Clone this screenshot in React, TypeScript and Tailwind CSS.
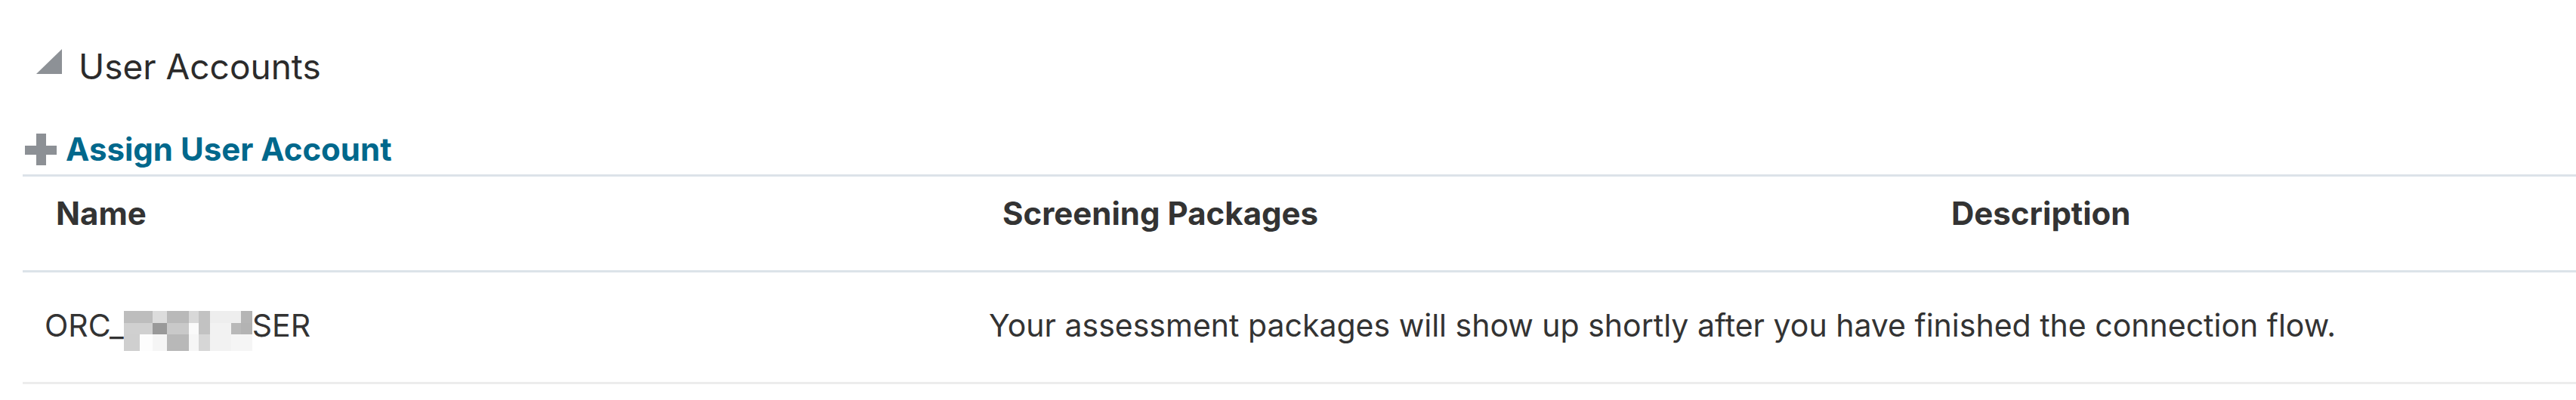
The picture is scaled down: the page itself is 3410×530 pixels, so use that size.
const mosaic = [
  { w: "w-[21px]", cells: ["bg-[#bdbdbd]", "bg-[#d0d0d0]", "bg-[#cfcfcf]"] },
  { w: "w-[17px]", cells: ["bg-[#bdbdbd]", "bg-[#d0d0d0]", "bg-[#fdfdfd]"] },
  { w: "w-[19px]", cells: ["bg-[#dcdcdc]", "bg-[#999999]", "bg-[#f5f5f5]"] },
  { w: "w-[29px]", cells: ["bg-[#b9b9b9]", "bg-[#c9c9c9]", "bg-[#b8b8b8]"] },
  { w: "w-[13px]", cells: ["bg-[#d8d8d8]", "bg-[#fafafa]", "bg-[#f6f6f6]"] },
  { w: "w-[15px]", cells: ["bg-[#c2c2c2]", "bg-[#c2c2c2]", "bg-[#d6d6d6]"] },
  { w: "w-[28px]", cells: ["bg-[#eeeeee]", "bg-[#f2f2f2]", "bg-[#f2f2f2]"] },
  { w: "w-[13px]", cells: ["bg-[#eeeeee]", "bg-[#b8b8b8]", "bg-[#f5f5f5]"] },
  { w: "w-[15px]", cells: ["bg-[#b5b5b5]", "bg-[#b3b3b3]", "bg-[#f5f5f5]"] },
];

const rowHeights = ["h-[16px]", "h-[15px]", "h-[22px]"];

// blurred part of the account name
const Mosaic = () => (
  <div className="mt-[6px] flex">
    {mosaic.map((col, i) => (
      <div key={i} className={`flex flex-col ${col.w}`}>
        {col.cells.map((c, j) => (
          <div key={j} className={`${rowHeights[j]} ${c}`} />
        ))}
      </div>
    ))}
  </div>
);

const App = () => {
  return (
    <div className="h-[530px] w-full overflow-hidden bg-white pl-[30px] pt-[60px] font-['Inter','Liberation_Sans',sans-serif] text-[#333333]">
      {/* section title */}
      <div className="flex h-[56px] items-start">
        <svg width="34" height="33" viewBox="0 0 34 33" className="ml-[18px] mt-[5px]">
          <polygon points="34,0 34,33 0,33" fill="#8d9196" />
        </svg>
        <h2 className="ml-[22px] text-[46px] leading-[56px] font-normal text-[#2b2b2b]">
          User Accounts
        </h2>
      </div>

      {/* assign link */}
      <div className="mt-[57px] flex h-[50px] items-center">
        <svg width="42" height="42" viewBox="0 0 42 42" className="ml-[3px]">
          <rect x="0" y="16" width="42" height="12" fill="#8c9095" />
          <rect x="15" y="0" width="13" height="42" fill="#8c9095" />
        </svg>
        <a className="ml-[12px] text-[42px] leading-[50px] font-bold text-[#00688c]">
          Assign User Account
        </a>
      </div>

      {/* table */}
      <div className="mt-[8px] border-t-[3px] border-[#dce3e9]">
        <div className="grid h-[127px] grid-cols-[1253px_1256px_1fr] border-b-[3px] border-[#dce3e9] pt-[24px] text-[42px] leading-[50px] font-bold">
          <div className="pl-[44px]">Name</div>
          <div className="pl-[44px]">Screening Packages</div>
          <div className="pl-[44px]">Description</div>
        </div>
        <div className="grid h-[148px] grid-cols-[1250px_1fr] border-b-[3px] border-[#ececec] pt-[45px] text-[41px] leading-[50px]">
          <div className="flex items-start pl-[29px]">
            <span>ORC_</span>
            <Mosaic />
            <span>SER</span>
          </div>
          <div className="pl-[29px]">
            Your assessment packages will show up shortly after you have finished the connection flow.
          </div>
        </div>
      </div>
    </div>
  );
};

export default App;
